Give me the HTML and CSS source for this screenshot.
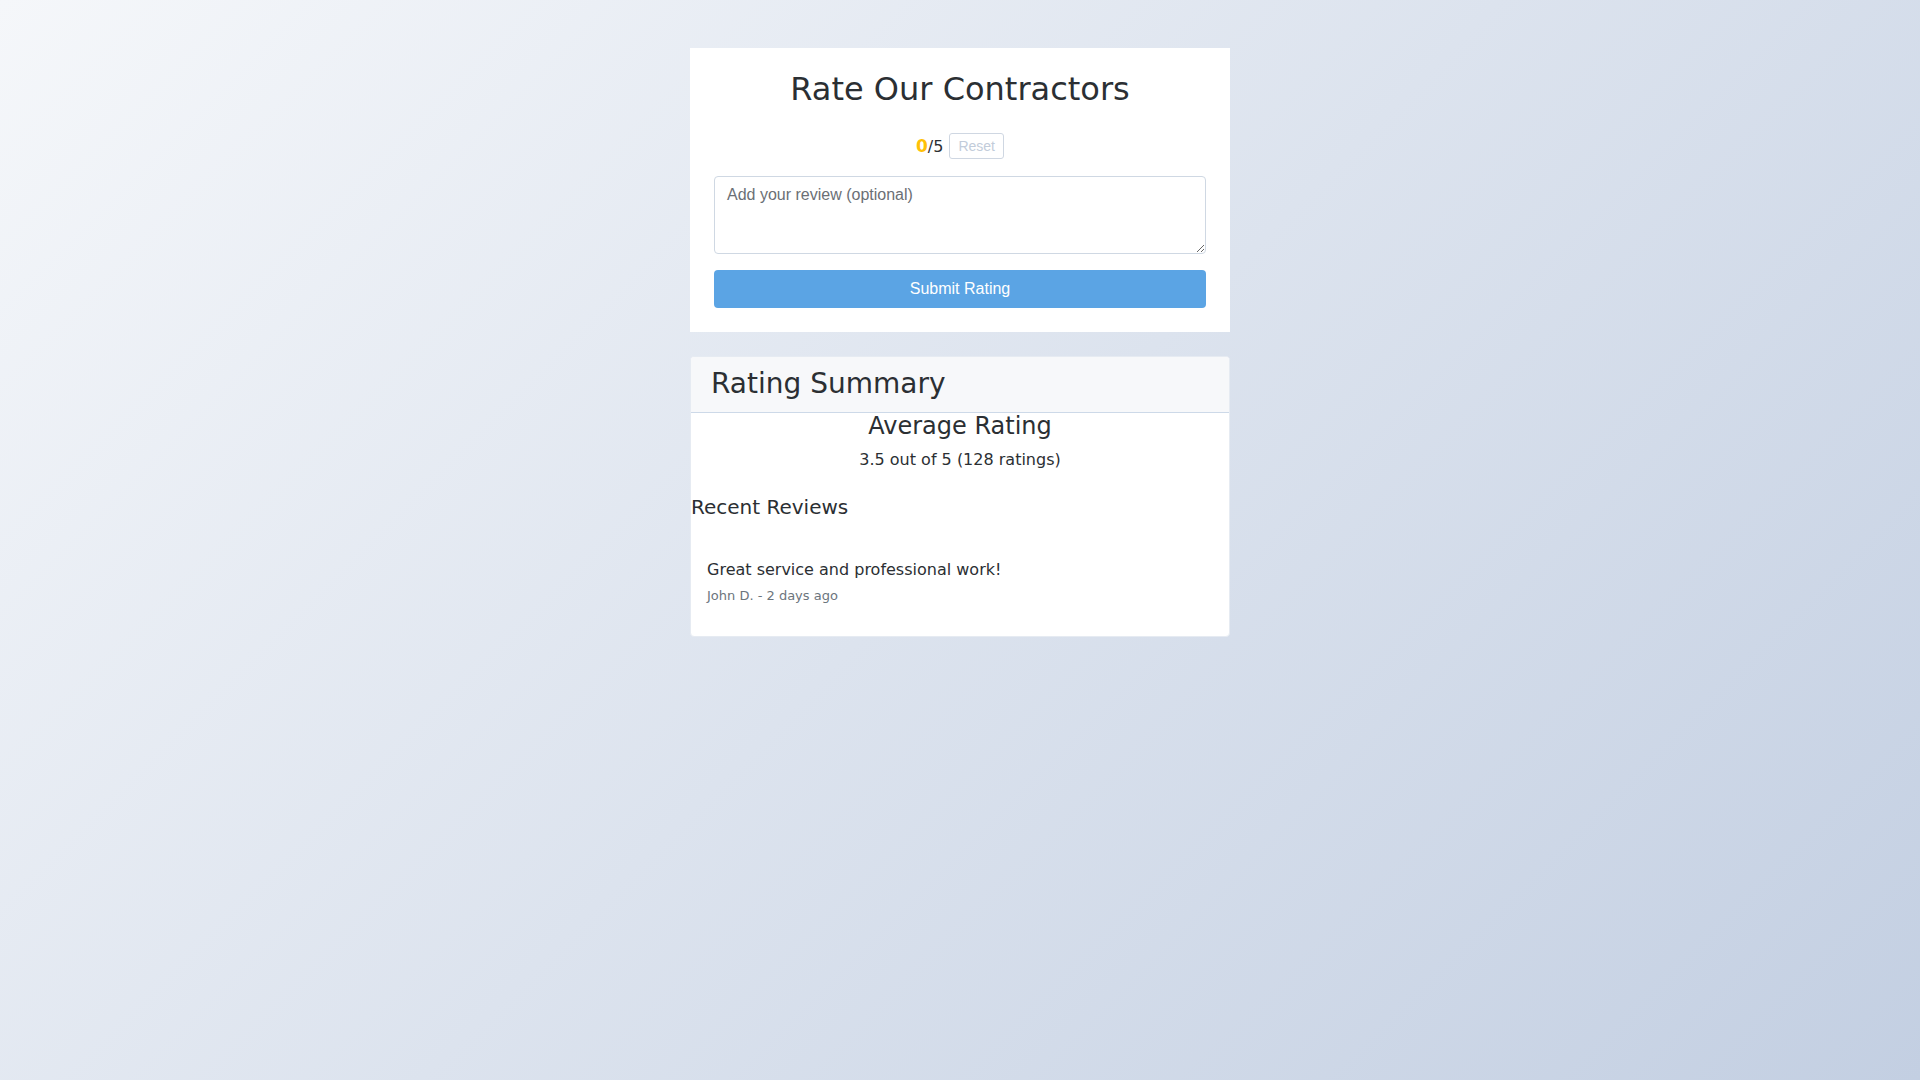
FILE: index.html
```html
<!DOCTYPE html>
<html lang="en">
<head>
<meta charset="utf-8">
<title>Rate Our Contractors</title>
<link rel="stylesheet" href="styles.css">
</head>
<body>
<main class="page">
  <section class="rate-card">
    <h1 class="rate-title">Rate Our Contractors</h1>
    <div class="rating-line">
      <span class="score"><span class="score-value">0</span>/5</span>
      <button class="reset-btn" type="button" disabled>Reset</button>
    </div>
    <textarea class="review-input" placeholder="Add your review (optional)"></textarea>
    <button class="submit-btn" type="button">Submit Rating</button>
  </section>

  <section class="summary-card">
    <div class="summary-header">
      <h2 class="summary-title">Rating Summary</h2>
    </div>
    <div class="summary-body">
      <h3 class="avg-title">Average Rating</h3>
      <p class="avg-text">3.5 out of 5 (128 ratings)</p>
      <h4 class="recent-title">Recent Reviews</h4>
      <div class="review-item">
        <p class="review-text">Great service and professional work!</p>
        <p class="review-meta">John D. - 2 days ago</p>
      </div>
    </div>
  </section>
</main>
</body>
</html>
```
FILE: styles.css
```css
* { box-sizing: border-box; }

html, body {
  margin: 0;
  min-height: 100%;
}

body {
  min-height: 100vh;
  font-family: "DejaVu Sans", sans-serif;
  color: #2b2f33;
  background: linear-gradient(135deg, #f5f7fa 0%, #c3cfe2 100%);
}

.page {
  width: 540px;
  margin: 0 auto;
  padding-top: 48px;
  display: flex;
  flex-direction: column;
  gap: 24px;
}

.rate-card {
  background: #fff;
  padding: 24px;
  display: flex;
  flex-direction: column;
}

.rate-title {
  margin: 0;
  font-size: 32px;
  font-weight: 400;
  line-height: 1.1;
  text-align: center;
  color: #2b2f33;
}

.rating-line {
  display: flex;
  justify-content: center;
  align-items: center;
  gap: 6px;
  margin-top: 26px;
  margin-bottom: 17px;
}

.score {
  font-size: 16px;
  color: #2b2f33;
}

.score-value {
  color: #ffc107;
  font-weight: 700;
  font-size: 17px;
}

.reset-btn {
  font-family: "Liberation Sans", Arial, sans-serif;
  font-size: 14px;
  padding: 4px 8px;
  height: 26px;
  line-height: 1;
  color: #c2ccda;
  background: #fff;
  border: 1px solid #cfd7e2;
  border-radius: 3px;
}

.review-input {
  display: block;
  width: 100%;
  height: 78px;
  padding: 9px 12px 8px 12px;
  font-family: "Liberation Sans", Arial, sans-serif;
  font-size: 16px;
  color: #333;
  border: 1px solid #cfd8e3;
  border-radius: 4px;
  background: #fff;
}

.review-input::placeholder {
  color: #6b6f75;
}

.submit-btn {
  margin-top: 16px;
  width: 100%;
  height: 38px;
  font-family: "Liberation Sans", Arial, sans-serif;
  font-size: 16px;
  color: #fff;
  background: #5ba4e4;
  border: none;
  border-radius: 4px;
}

.summary-card {
  background: #fff;
  border: 1px solid #e6ebf2;
  border-radius: 4px;
  overflow: hidden;
}

.summary-header {
  background: #f7f8fa;
  border-bottom: 1px solid #cdd9e8;
  padding: 10px 20px 11px 20px;
}

.summary-title {
  margin: 0;
  font-size: 28px;
  font-weight: 400;
  line-height: 1.2;
  color: #2b2f33;
}

.summary-body {
  padding: 0 0 15px 0;
}

.avg-title {
  margin: 0 0 9px 0;
  font-size: 24px;
  font-weight: 400;
  line-height: 1.1;
  text-align: center;
}

.avg-text {
  margin: 0 0 23px 0;
  font-size: 16px;
  line-height: 1.5;
  text-align: center;
}

.recent-title {
  margin: 0;
  font-size: 20px;
  font-weight: 400;
  line-height: 1.2;
}

.review-item {
  margin-top: 24px;
  padding: 15px 16px 15px 16px;
}

.review-text {
  margin: 0 0 4px 0;
  font-size: 16px;
  line-height: 1.5;
}

.review-meta {
  margin: 0;
  font-size: 13px;
  color: #6c757d;
  line-height: 1.5;
}
```
